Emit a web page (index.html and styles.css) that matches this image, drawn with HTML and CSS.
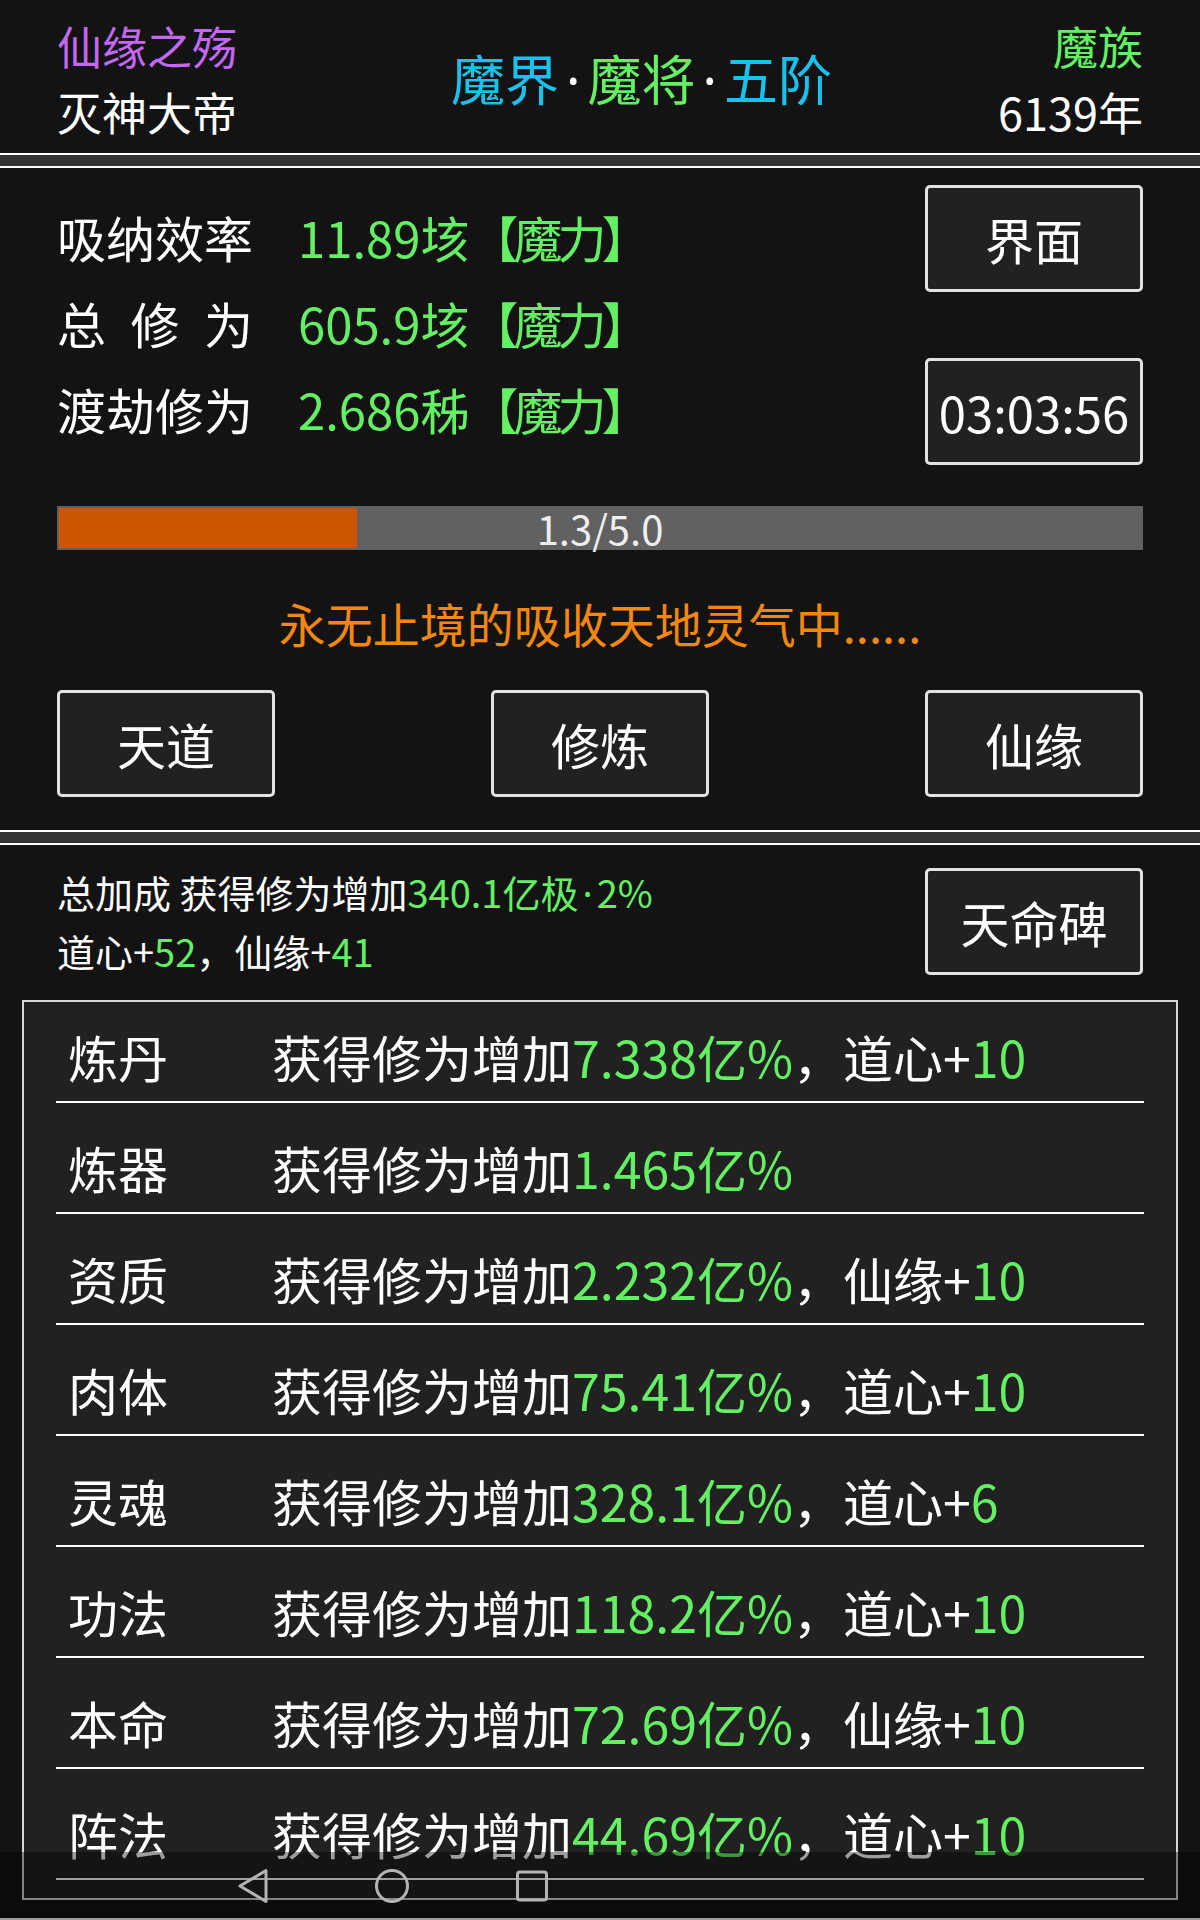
FILE: index.html
```html
<!DOCTYPE html>
<html lang="zh-CN">
<head>
    <meta charset="UTF-8">
    <meta name="viewport" content="width=device-width, initial-scale=1.0">
    <title>仙缘之殇</title>
    <link rel="stylesheet" href="styles.css">
</head>
<body>
    <div class="screen">
        <header class="top">
            <div class="top-side">
                <div class="purple">仙缘之殇</div>
                <div>灭神大帝</div>
            </div>
            <div class="realm"><span class="cyan">魔界</span><span class="dot">·</span><span class="green">魔将</span><span class="dot">·</span><span class="cyan">五阶</span></div>
            <div class="top-side right">
                <div class="green">魔族</div>
                <div>6139年</div>
            </div>
        </header>
        <div class="divider"></div>
        <section class="panel cultivate">
            <div class="cult-top">
                <div class="stats">
                    <div class="stat"><span class="stat-label">吸纳效率</span><span class="green">11.89垓<span class="unit">【魔力】</span></span></div>
                    <div class="stat"><span class="stat-label">总 修 为</span><span class="green">605.9垓<span class="unit">【魔力】</span></span></div>
                    <div class="stat"><span class="stat-label">渡劫修为</span><span class="green">2.686秭<span class="unit">【魔力】</span></span></div>
                </div>
                <div class="side-buttons">
                    <div class="btn">界面</div>
                    <div class="btn">03:03:56</div>
                </div>
            </div>
            <div class="progress">
                <div class="progress-fill" style="width: 27.5%"></div>
                <span class="progress-text">1.3/5.0</span>
            </div>
            <div class="status">永无止境的吸收天地灵气中......</div>
            <div class="actions">
                <div class="btn">天道</div>
                <div class="btn">修炼</div>
                <div class="btn">仙缘</div>
            </div>
        </section>
        <div class="divider"></div>
        <section class="panel bonus">
            <div class="bonus-top">
                <div class="bonus-text">
                    <div>总加成 获得修为增加<span class="green">340.1亿极<span class="dot small">·</span>2%</span></div>
                    <div>道心+<span class="green">52</span>，仙缘+<span class="green">41</span></div>
                </div>
                <div class="btn">天命碑</div>
            </div>
            <div class="list">
                <div class="list-inner">
                    <div class="row"><span class="row-name">炼丹</span>获得修为增加<span class="green">7.338亿%</span>，道心+<span class="green">10</span></div>
                    <div class="row"><span class="row-name">炼器</span>获得修为增加<span class="green">1.465亿%</span></div>
                    <div class="row"><span class="row-name">资质</span>获得修为增加<span class="green">2.232亿%</span>，仙缘+<span class="green">10</span></div>
                    <div class="row"><span class="row-name">肉体</span>获得修为增加<span class="green">75.41亿%</span>，道心+<span class="green">10</span></div>
                    <div class="row"><span class="row-name">灵魂</span>获得修为增加<span class="green">328.1亿%</span>，道心+<span class="green">6</span></div>
                    <div class="row"><span class="row-name">功法</span>获得修为增加<span class="green">118.2亿%</span>，道心+<span class="green">10</span></div>
                    <div class="row"><span class="row-name">本命</span>获得修为增加<span class="green">72.69亿%</span>，仙缘+<span class="green">10</span></div>
                    <div class="row"><span class="row-name">阵法</span>获得修为增加<span class="green">44.69亿%</span>，道心+<span class="green">10</span></div>
                </div>
            </div>
        </section>
        <div class="navbar">
            <svg class="nav-icon" viewBox="0 0 36 36"><path d="M32 2.5 L6 18 L32 33.5 Z" fill="none" stroke="#b4b4b4" stroke-width="3" stroke-linejoin="round"/></svg>
            <svg class="nav-icon" viewBox="0 0 36 36"><circle cx="18" cy="18" r="15.5" fill="none" stroke="#b4b4b4" stroke-width="3"/></svg>
            <svg class="nav-icon" viewBox="0 0 36 36"><rect x="3.5" y="4" width="29" height="28" rx="2.5" fill="none" stroke="#b4b4b4" stroke-width="3"/></svg>
        </div>
    </div>
</body>
</html>
```

FILE: styles.css
```css
body {
    margin: 0;
    background-color: #131313;
    color: #fff;
    font-family: "Noto Sans CJK SC", "Noto Sans", sans-serif;
}
.screen {
    position: relative;
    width: 1200px;
    height: 1920px;
    overflow: hidden;
    background-color: #131313;
}
.purple {
    color: #c467f2;
}
.green {
    color: #63f163;
}
.cyan {
    color: #17c2ee;
}
.dot {
    font-family: "Noto Sans", sans-serif;
    color: #fff;
    padding: 0 7px;
}
.dot.small {
    color: inherit;
    padding: 0 4px;
}
.top {
    height: 153px;
    box-sizing: border-box;
    padding: 13px 57px 8px;
    display: flex;
    justify-content: space-between;
    align-items: center;
}
.top-side {
    font-size: 45px;
    line-height: 66px;
}
.top-side.right {
    text-align: right;
}
.realm {
    font-size: 54px;
    line-height: 66px;
    margin-left: 48px;
}
.divider {
    height: 11px;
    background-color: #333;
    border-top: 2px solid #fff;
    border-bottom: 2px solid #fff;
}
.panel {
    box-sizing: border-box;
}
.cultivate {
    height: 662px;
    padding: 17px 57px 0;
}
.cult-top {
    display: flex;
    justify-content: space-between;
}
.stats {
    padding-top: 9px;
}
.stat {
    font-size: 49px;
    line-height: 86px;
    display: flex;
}
.stat-label {
    width: 4em;
    margin-right: 45px;
    text-align: justify;
    text-align-last: justify;
}
.unit {
    letter-spacing: -5px;
}
.side-buttons {
    display: flex;
    flex-direction: column;
    gap: 66px;
}
.btn {
    width: 218px;
    height: 107px;
    box-sizing: border-box;
    border: 3px solid #e2e2e2;
    border-radius: 5px;
    background-color: #212121;
    display: flex;
    justify-content: center;
    align-items: center;
    font-size: 49px;
    white-space: nowrap;
}
.progress {
    position: relative;
    margin-top: 41px;
    height: 44px;
    box-sizing: border-box;
    padding: 2px;
    background-color: #616161;
}
.progress-fill {
    height: 100%;
    background-color: #cc5500;
}
.progress-text {
    position: absolute;
    left: 0;
    right: 0;
    top: 0;
    text-align: center;
    font-size: 40px;
    line-height: 44px;
    color: #eee;
}
.status {
    margin-top: 43px;
    text-align: center;
    font-size: 47px;
    line-height: 60px;
    color: #f5870e;
}
.actions {
    margin-top: 37px;
    display: flex;
    justify-content: space-between;
}
.bonus {
    height: 1075px;
    padding: 23px 22px 0;
    border-bottom: 2px solid #fff;
}
.bonus-top {
    display: flex;
    justify-content: space-between;
    padding: 0 35px;
}
.bonus-text {
    margin-top: -5px;
    font-size: 38px;
    line-height: 57px;
}
.list {
    margin-top: 21px;
    height: 900px;
    box-sizing: border-box;
    border: 2px solid #d6d6d6;
    background-color: #212121;
    overflow: hidden;
}
.list-inner {
    margin: -10px 32px 0;
}
.row {
    padding: 35px 0 16px 12px;
    font-size: 50px;
    line-height: 58px;
    border-bottom: 2px solid #fff;
    white-space: nowrap;
}
.row-name {
    display: inline-block;
    width: 204px;
}
.navbar {
    position: absolute;
    left: 0;
    right: 0;
    bottom: 0;
    height: 68px;
    background-color: rgba(0, 0, 0, 0.38);
    display: flex;
    align-items: center;
    padding-left: 234px;
    box-sizing: border-box;
    gap: 104px;
}
.nav-icon {
    width: 36px;
    height: 36px;
}
```
